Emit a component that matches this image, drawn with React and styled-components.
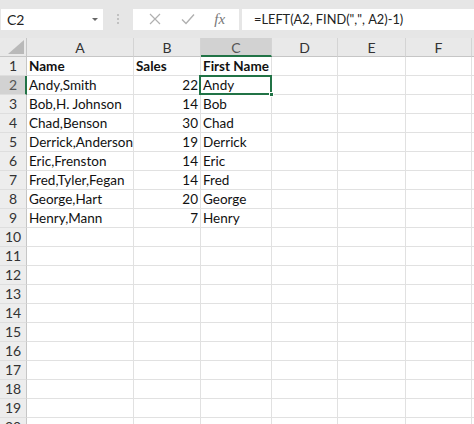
import React from 'react'
import styled, { createGlobalStyle, css } from 'styled-components'

const GREEN = '#217346'

const GlobalStyle = createGlobalStyle`
  html, body {
    margin: 0;
    padding: 0;
    background: #fff;
    overflow: hidden;
  }
  body {
    font-family: Lato, 'Open Sans', sans-serif;
  }
`

const Sheet = styled.div`
  width: 474px;
  height: 424px;
  overflow: hidden;
  background: #fff;
`

const TopBar = styled.div`
  height: 38px;
  background: #e6e6e6;
  display: flex;
  align-items: center;
  padding-left: 1px;
  box-sizing: border-box;
`

const NameBox = styled.div`
  width: 102px;
  height: 21px;
  background: #fff;
  display: flex;
  align-items: center;
  justify-content: space-between;
  padding: 0 5px 0 6px;
  box-sizing: border-box;
  font-size: 14px;
  color: #222;
`

const Caret = styled.span`
  width: 0;
  height: 0;
  border-left: 3px solid transparent;
  border-right: 3px solid transparent;
  border-top: 3px solid #666;
`

const Dots = styled.div`
  width: 30px;
  display: flex;
  flex-direction: column;
  align-items: center;
  gap: 2px;
  span {
    width: 2px;
    height: 2px;
    border-radius: 50%;
    background: #b5b5b5;
  }
`

const FxBox = styled.div`
  width: 106px;
  height: 21px;
  background: #fff;
  display: flex;
  align-items: center;
  justify-content: space-around;
  padding: 0 4px 0 6px;
  box-sizing: border-box;
`

const Fx = styled.span`
  font-family: 'Liberation Serif', serif;
  font-style: italic;
  font-size: 15px;
  color: #777;
`

const Formula = styled.div`
  flex: 1;
  height: 21px;
  margin-left: 3px;
  background: #fff;
  display: flex;
  align-items: center;
  padding-left: 12px;
  font-family: Lato, sans-serif;
  font-size: 12.8px;
  font-kerning: none;
  color: #222;
  white-space: nowrap;
`

const Grid = styled.div`
  display: grid;
  grid-template-columns: 27px 107px 67px 71px 66px 68px 66px 60px;
  grid-auto-rows: 19px;
`

const Cell = styled.div`
  box-sizing: border-box;
  border-right: 1px solid #e1e1e1;
  border-bottom: 1px solid #e1e1e1;
  font-size: 13.5px;
  line-height: 18px;
  color: #111;
  padding: 0 2px;
  white-space: nowrap;
  text-align: ${p => (p.$num ? 'right' : 'left')};
  font-weight: ${p => (p.$bold ? 700 : 400)};
  position: relative;
  ${p =>
    p.$active &&
    css`
      &::after {
        content: '';
        position: absolute;
        left: -2px;
        top: -1px;
        right: -1px;
        bottom: -1px;
        border: 2px solid ${GREEN};
        pointer-events: none;
      }
      &::before {
        content: '';
        position: absolute;
        right: -3px;
        bottom: -3px;
        width: 5px;
        height: 5px;
        background: ${GREEN};
        border: 1px solid #fff;
        box-sizing: border-box;
        z-index: 1;
      }
    `}
`

const ColHead = styled.div`
  box-sizing: border-box;
  background: ${p => (p.$selected ? '#d2d2d2' : '#e9e9e9')};
  border-right: 1px solid #d4d4d4;
  border-bottom: ${p => (p.$selected ? `2px solid ${GREEN}` : '1px solid #c6c6c6')};
  font-size: 14px;
  line-height: 19px;
  text-align: center;
  color: ${p => (p.$selected ? '#555' : '#333')};
`

const Corner = styled.div`
  background: #e9e9e9;
  border-right: 1px solid #c6c6c6;
  border-bottom: 1px solid #c6c6c6;
  box-sizing: border-box;
  display: flex;
  align-items: flex-end;
  justify-content: flex-end;
  padding: 0 2px 2px 0;
`

const RowHead = styled.div`
  box-sizing: border-box;
  background: ${p => (p.$selected ? '#d2d2d2' : '#ededed')};
  border-right: ${p => (p.$selected ? `2px solid ${GREEN}` : '1px solid #c6c6c6')};
  border-bottom: 1px solid #dedede;
  font-size: 14px;
  line-height: 18px;
  text-align: center;
  padding-left: ${p => (p.$selected ? '1px' : '0')};
  color: ${p => (p.$selected ? '#555' : '#333')};
`

const cols = ['A', 'B', 'C', 'D', 'E', 'F', 'G']

const data = [
  ['Name', 'Sales', 'First Name'],
  ['Andy,Smith', 22, 'Andy'],
  ['Bob,H. Johnson', 14, 'Bob'],
  ['Chad,Benson', 30, 'Chad'],
  ['Derrick,Anderson', 19, 'Derrick'],
  ['Eric,Frenston', 14, 'Eric'],
  ['Fred,Tyler,Fegan', 14, 'Fred'],
  ['George,Hart', 20, 'George'],
  ['Henry,Mann', 7, 'Henry'],
]

const TOTAL_ROWS = 20

export default function App() {
  const rows = []
  for (let r = 1; r <= TOTAL_ROWS; r++) {
    const values = data[r - 1] || []
    rows.push(
      <React.Fragment key={r}>
        <RowHead $selected={r === 2}>{r}</RowHead>
        {cols.map((c, i) => {
          const v = values[i]
          return (
            <Cell
              key={c}
              $bold={r === 1}
              $num={typeof v === 'number'}
              $active={r === 2 && c === 'C'}
            >
              {v}
            </Cell>
          )
        })}
      </React.Fragment>
    )
  }

  return (
    <Sheet>
      <GlobalStyle />
      <TopBar>
        <NameBox>
          C2
          <Caret />
        </NameBox>
        <Dots>
          <span />
          <span />
          <span />
        </Dots>
        <FxBox>
          <svg width="12" height="12" viewBox="0 0 12 12">
            <path d="M1 1 L11 11 M11 1 L1 11" stroke="#b0b0b0" strokeWidth="1.2" fill="none" />
          </svg>
          <svg width="14" height="12" viewBox="0 0 14 12">
            <path d="M1 6.5 L5 10.5 L13 1.5" stroke="#b0b0b0" strokeWidth="1.4" fill="none" />
          </svg>
          <Fx>fx</Fx>
        </FxBox>
        <Formula>=LEFT(A2, FIND(",", A2)-1)</Formula>
      </TopBar>
      <Grid>
        <Corner>
          <svg width="16" height="14" viewBox="0 0 16 14">
            <path d="M16 0 L16 14 L0 14 Z" fill="#b9b9b9" />
          </svg>
        </Corner>
        {cols.map(c => (
          <ColHead key={c} $selected={c === 'C'}>
            {c}
          </ColHead>
        ))}
        {rows}
      </Grid>
    </Sheet>
  )
}
